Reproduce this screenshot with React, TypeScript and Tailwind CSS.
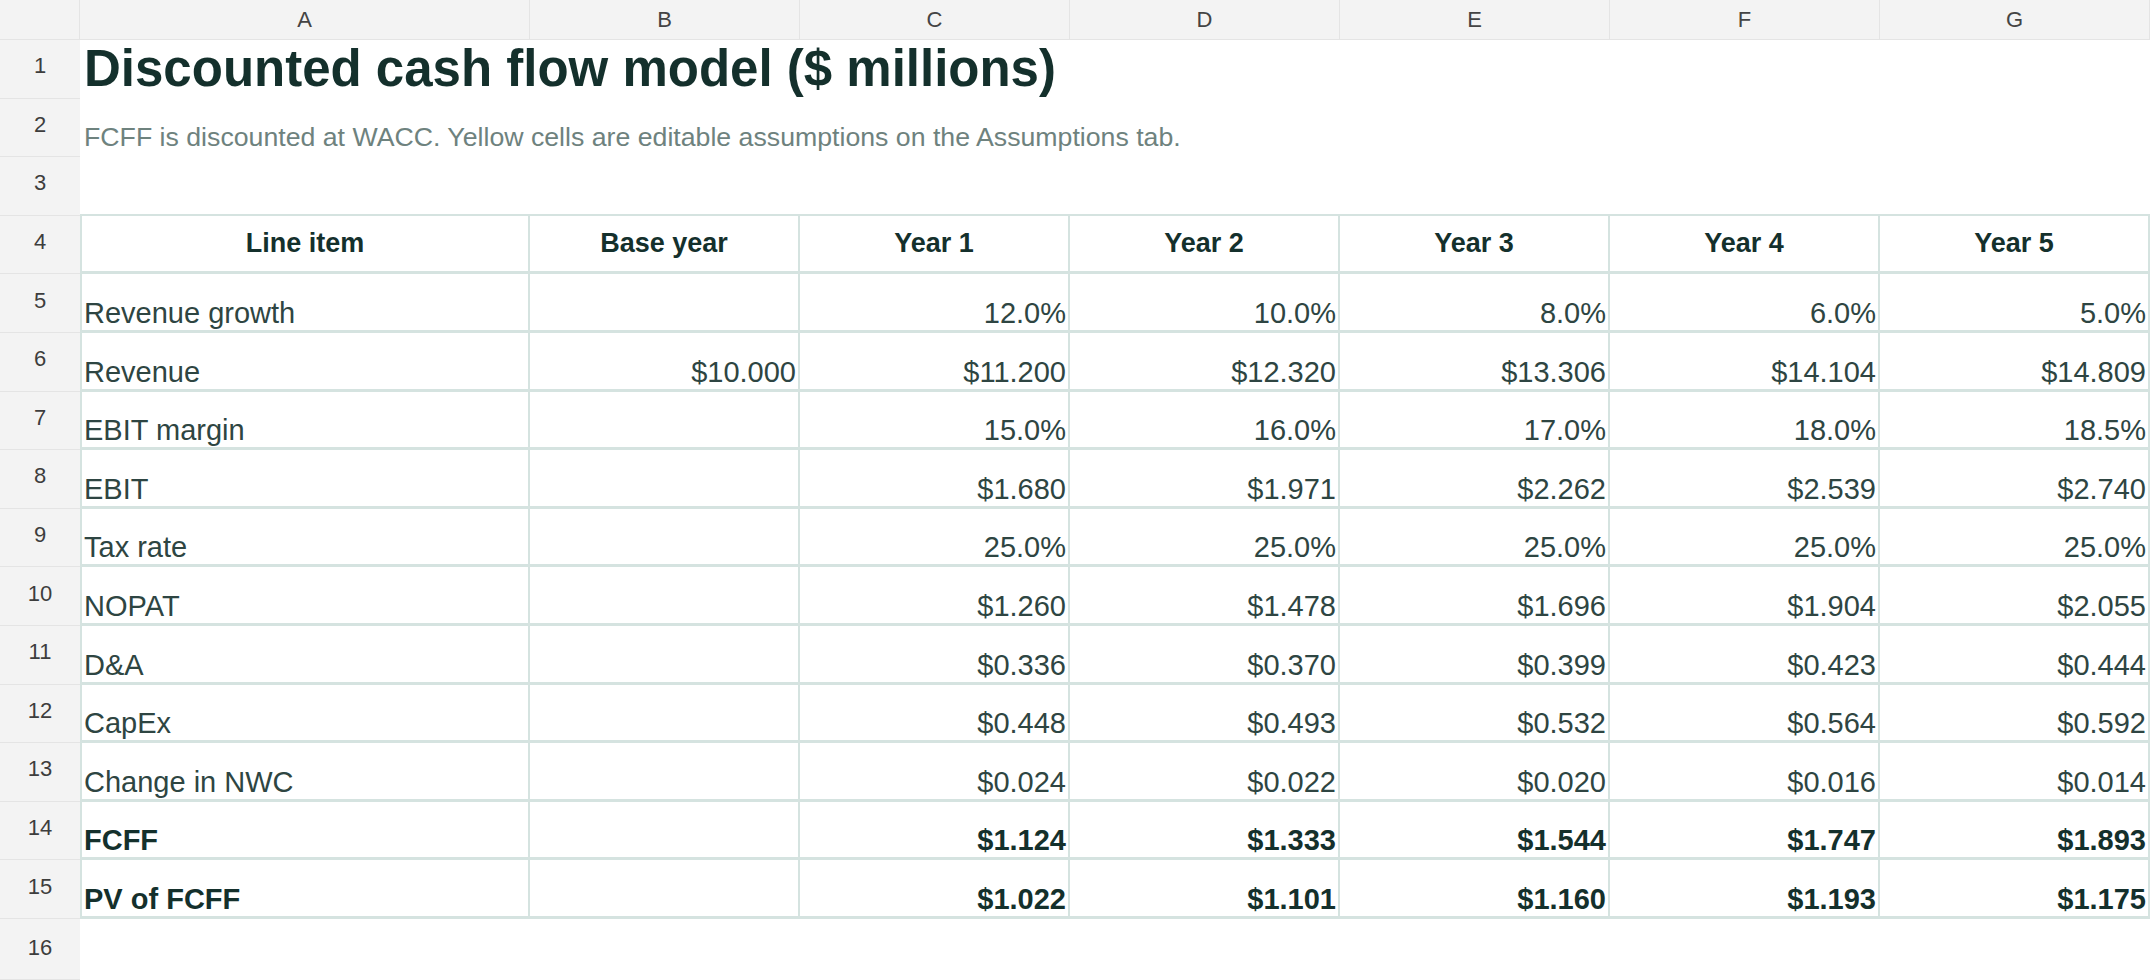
import React from "react";

const cols = ["A", "B", "C", "D", "E", "F", "G"];
type Row = { label: string; base: string; vals: string[]; bold?: boolean };
const rows: Row[] = [
  { label: "Revenue growth", base: "", vals: ["12.0%", "10.0%", "8.0%", "6.0%", "5.0%"] },
  { label: "Revenue", base: "$10.000", vals: ["$11.200", "$12.320", "$13.306", "$14.104", "$14.809"] },
  { label: "EBIT margin", base: "", vals: ["15.0%", "16.0%", "17.0%", "18.0%", "18.5%"] },
  { label: "EBIT", base: "", vals: ["$1.680", "$1.971", "$2.262", "$2.539", "$2.740"] },
  { label: "Tax rate", base: "", vals: ["25.0%", "25.0%", "25.0%", "25.0%", "25.0%"] },
  { label: "NOPAT", base: "", vals: ["$1.260", "$1.478", "$1.696", "$1.904", "$2.055"] },
  { label: "D&A", base: "", vals: ["$0.336", "$0.370", "$0.399", "$0.423", "$0.444"] },
  { label: "CapEx", base: "", vals: ["$0.448", "$0.493", "$0.532", "$0.564", "$0.592"] },
  { label: "Change in NWC", base: "", vals: ["$0.024", "$0.022", "$0.020", "$0.016", "$0.014"] },
  { label: "FCFF", base: "", vals: ["$1.124", "$1.333", "$1.544", "$1.747", "$1.893"], bold: true },
  { label: "PV of FCFF", base: "", vals: ["$1.022", "$1.101", "$1.160", "$1.193", "$1.175"], bold: true },
];

const RowNum = ({ n, tall }: { n: number; tall?: boolean }) => (
  <div className={`bg-[#f3f3f3] border-b border-[#e4e4e4] flex justify-center text-[22px] text-[#3d3d3d] font-light ${tall ? "h-[61px] items-start pt-3" : "h-[58.6px] items-center pb-[6px]"}`}>{n}</div>
);

export default function App() {
  const grid = "grid grid-cols-[80px_450px_270px_270px_270px_270px_270px_270px]";
  return (
    <div className="w-[2150px] h-[980px] bg-white overflow-hidden" style={{ fontFamily: '"Liberation Sans", Arial, sans-serif' }}>
      <div className={`${grid} h-[40px] bg-[#f3f3f3] border-b border-[#e4e4e4]`}>
        <div className="border-r border-[#e4e4e4]" />
        {cols.map((c) => (
          <div key={c} className="flex items-center justify-center border-r border-[#e4e4e4] text-[22px] font-light text-[#444]">{c}</div>
        ))}
      </div>
      <div className={grid}>
        <RowNum n={1} />
        <div className="col-span-7 h-[58.6px] flex items-center pl-[4px] text-[51px] font-bold text-[#14302c] whitespace-nowrap">Discounted cash flow model ($ millions)</div>
        <RowNum n={2} />
        <div className="col-span-7 h-[58.6px] flex items-end pb-[0px] pl-[4px] text-[26.7px] text-[#6e827e] whitespace-nowrap">FCFF is discounted at WACC. Yellow cells are editable assumptions on the Assumptions tab.</div>
        <RowNum n={3} />
        <div className="col-span-7 h-[58.6px] border-b-2 border-[#d5e3e0]" />
        <RowNum n={4} />
        <div className="h-[58.6px] flex items-center justify-center border-r-2 border-b-[3px] border-l-2 border-[#d5e3e0] text-[27px] font-bold text-[#14302c]">Line item</div>
        <div className="h-[58.6px] flex items-center justify-center border-r-2 border-b-[3px] border-[#d5e3e0] text-[27px] font-bold text-[#14302c]">Base year</div>
        {[1, 2, 3, 4, 5].map((y) => (
          <div key={y} className="h-[58.6px] flex items-center justify-center border-r-2 border-b-[3px] border-[#d5e3e0] text-[27px] font-bold text-[#14302c]">Year {y}</div>
        ))}
        {rows.map((r, i) => {
          const txt = r.bold ? "font-bold text-[#14302c]" : "text-[#2e4542]";
          const cell = `h-[58.6px] flex items-end pb-[0px] leading-[34px] border-r-2 border-b-[3px] border-[#d5e3e0] text-[29px] ${txt}`;
          return (
            <React.Fragment key={r.label}>
              <RowNum n={i + 5} />
              <div className={`${cell} border-l-2 pl-[2px]`}>{r.label}</div>
              <div className={`${cell} justify-end pr-[2px]`}>{r.base}</div>
              {r.vals.map((v, j) => (
                <div key={j} className={`${cell} justify-end pr-[2px]`}>{v}</div>
              ))}
            </React.Fragment>
          );
        })}
        <RowNum n={16} tall />
        <div className="col-span-7" />
      </div>
    </div>
  );
}
